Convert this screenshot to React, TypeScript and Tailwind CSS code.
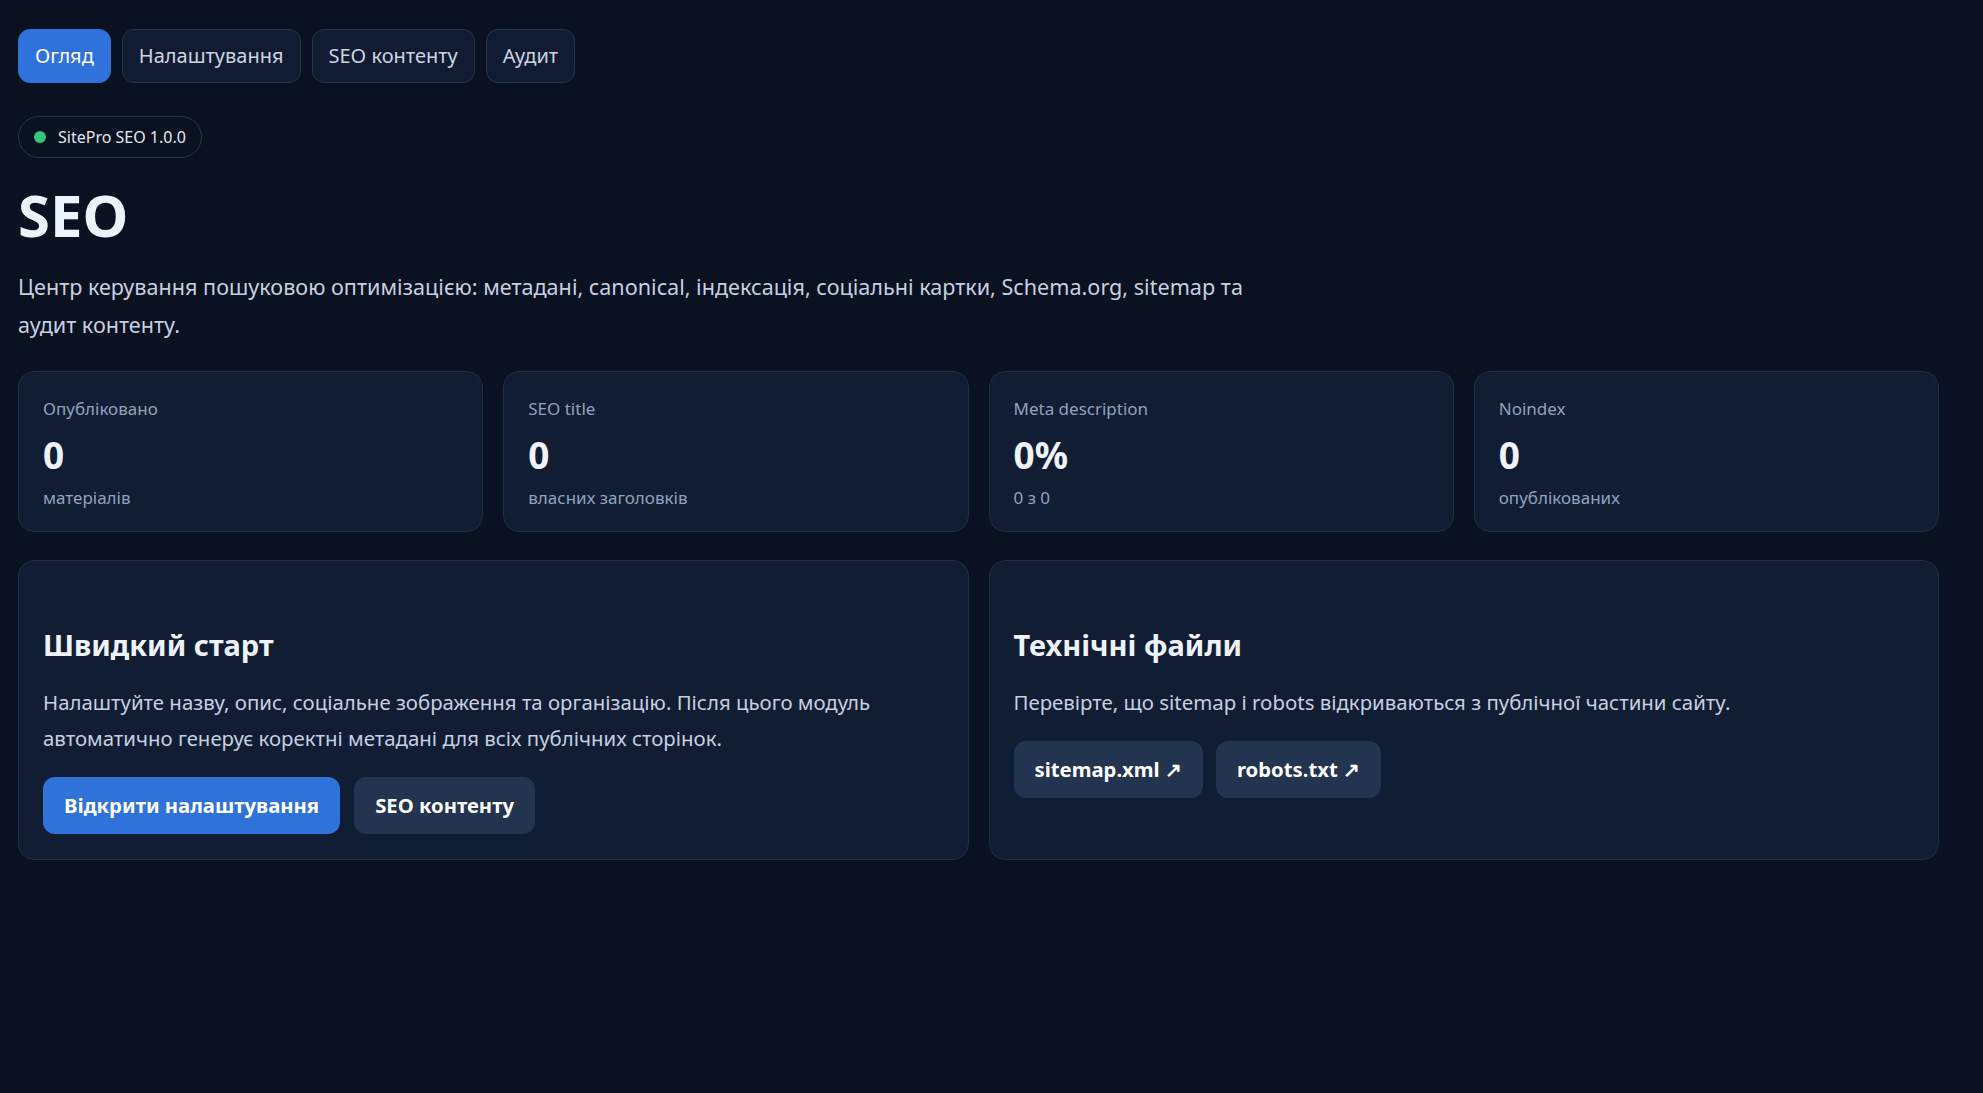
import React from "react";

type Stat = {
	label: string;
	value: string;
	hint: string;
};

const tabs = ["Огляд", "Налаштування", "SEO контенту", "Аудит"];

const stats: Stat[] = [
	{ label: "Опубліковано", value: "0", hint: "матеріалів" },
	{ label: "SEO title", value: "0", hint: "власних заголовків" },
	{ label: "Meta description", value: "0%", hint: "0 з 0" },
	{ label: "Noindex", value: "0", hint: "опублікованих" },
];

// Card shell shared by the stat tiles and the info panels
const Card = ({ className = "", children }: { className?: string; children: React.ReactNode }) => (
	<div className={`rounded-[16px] border border-[#1f2e48] bg-[#111d33] ${className}`}>{children}</div>
);

const ActionButton = ({ primary = false, children }: { primary?: boolean; children: React.ReactNode }) => (
	<button
		className={`h-[57px] rounded-[12px] px-[21px] text-[20.3px] font-bold text-white ${
			primary ? "bg-[#2f72d9]" : "bg-[#22344f]"
		}`}
	>
		{children}
	</button>
);

export default function App() {
	const [active, setActive] = React.useState(0);

	return (
		<div className="min-h-screen bg-[#0a1120] px-[18px] pt-[29px] font-['Noto_Sans',sans-serif] text-[#e8eefa]">
			<div className="w-[1921px]">
				{/* Tabs */}
				<nav className="flex gap-[11px]">
					{tabs.map((tab, i) => (
						<button
							key={tab}
							onClick={() => setActive(i)}
							className={`h-[54px] rounded-[12px] border px-[16px] text-[20px] ${
								i === active
									? "border-[#2f72d9] bg-[#2f72d9] text-white"
									: "border-[#24354f] bg-[#111c33] text-[#cbd5e1]"
							}`}
						>
							{tab}
						</button>
					))}
				</nav>

				{/* Version badge */}
				<div className="mt-[33px] inline-flex h-[42px] items-center gap-[12px] rounded-full border border-[#24354f] pl-[15px] pr-[15px] text-[16px] text-[#e2e8f0]">
					<span className="h-[12px] w-[12px] rounded-full bg-[#34c77b]" />
					SitePro SEO 1.0.0
				</div>

				<h1 className="mt-[24px] text-[58px] font-bold leading-[66px] text-[#eef2fb]">SEO</h1>
				<p className="mt-[20px] max-w-[1250px] text-[21.6px] leading-[38px] text-[#c5d0e0]">
					Центр керування пошуковою оптимізацією: метадані, canonical, індексація, соціальні картки, Schema.org, sitemap та
					аудит контенту.
				</p>

				{/* Stats */}
				<div className="mt-[27px] grid grid-cols-4 gap-[20px]">
					{stats.map((s) => (
						<Card key={s.label} className="h-[161px] px-[24px] pt-[24px]">
							<div className="text-[17px] leading-[26px] text-[#8fa3bf]">{s.label}</div>
							<div className="mt-[10px] text-[37px] font-bold leading-[45px] text-[#eef2fb]">{s.value}</div>
							<div className="mt-[8px] text-[17px] leading-[26px] text-[#8fa3bf]">{s.hint}</div>
						</Card>
					))}
				</div>

				{/* Panels */}
				<div className="mt-[28px] grid grid-cols-2 gap-[20px]">
					<Card className="px-[24px] pb-[25px] pt-[65px]">
						<h2 className="text-[29px] font-bold leading-[38px] text-[#eef2fb]">Швидкий старт</h2>
						<p className="mt-[20px] text-[20.4px] leading-[36px] text-[#c5d0e0]">
							Налаштуйте назву, опис, соціальне зображення та організацію. Після цього модуль
							<br />
							автоматично генерує коректні метадані для всіх публічних сторінок.
						</p>
						<div className="mt-[21px] flex gap-[14px]">
							<ActionButton primary>Відкрити налаштування</ActionButton>
							<ActionButton>SEO контенту</ActionButton>
						</div>
					</Card>
					<Card className="px-[24px] pb-[25px] pt-[65px]">
						<h2 className="text-[29px] font-bold leading-[38px] text-[#eef2fb]">Технічні файли</h2>
						<p className="mt-[20px] text-[20.4px] leading-[36px] text-[#c5d0e0]">
							Перевірте, що sitemap і robots відкриваються з публічної частини сайту.
						</p>
						<div className="mt-[21px] flex gap-[13px]">
							<ActionButton>sitemap.xml ↗</ActionButton>
							<ActionButton>robots.txt ↗</ActionButton>
						</div>
					</Card>
				</div>
			</div>
		</div>
	);
}
